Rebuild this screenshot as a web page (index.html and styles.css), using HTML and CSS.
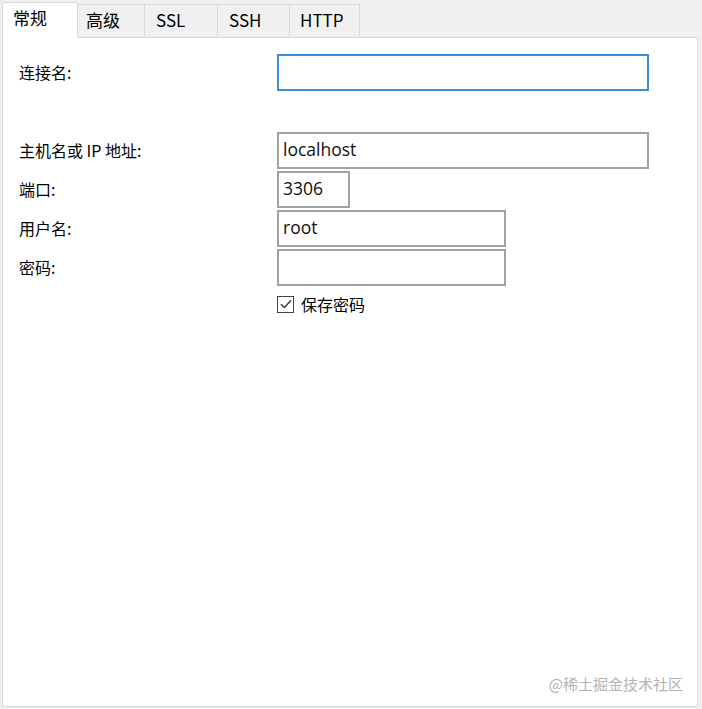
FILE: index.html
```html
<!DOCTYPE html>
<html lang="zh-CN">
<head>
  <meta charset="UTF-8">
  <title>连接属性</title>
  <link rel="stylesheet" href="styles.css">
</head>
<body>
  <div class="tabs">
    <div class="tab active">常规</div>
    <div class="tab">高级</div>
    <div class="tab">SSL</div>
    <div class="tab">SSH</div>
    <div class="tab">HTTP</div>
  </div>

  <div class="panel">
    <div class="form">
      <label class="label">连接名:</label>
      <div class="field"><div class="input wide focus"></div></div>

      <div class="spacer"></div>

      <label class="label">主机名或 IP 地址:</label>
      <div class="field"><div class="input wide">localhost</div></div>

      <label class="label">端口:</label>
      <div class="field"><div class="input port">3306</div></div>

      <label class="label">用户名:</label>
      <div class="field"><div class="input mid">root</div></div>

      <label class="label">密码:</label>
      <div class="field"><div class="input mid"></div></div>

      <div></div>
      <div class="check-row">
        <span class="checkbox">
          <svg width="14" height="14" viewBox="0 0 14 14">
            <path d="M2 7.2 L5.4 10.6 L12 3.2" fill="none" stroke="#333" stroke-width="1.4"/>
          </svg>
        </span>
        <span>保存密码</span>
      </div>
    </div>

    <div class="watermark">@稀土掘金技术社区</div>
  </div>
</body>
</html>
```

FILE: styles.css
```css
* {
  box-sizing: border-box;
}
body {
  margin: 0;
  width: 702px;
  height: 709px;
  background: #f0f0f0;
  font-family: "Noto Sans CJK SC", "Noto Sans", sans-serif;
  font-size: 16px;
  color: #000;
}
.tabs {
  display: flex;
  align-items: flex-end;
  height: 37px;
  padding-left: 2px;
}
.tab {
  height: 32px;
  padding: 0 8px;
  border: 1px solid #d9d9d9;
  border-bottom: none;
  border-left: none;
  background: #f0f0f0;
  line-height: 30px;
  font-size: 17px;
  margin-bottom: 1px;
}
.tab:nth-child(2) { width: 68px; border-left: 1px solid #d9d9d9; }
.tab:nth-child(3) { width: 73px; padding-left: 11px; }
.tab:nth-child(4) { width: 72px; padding-left: 11px; }
.tab:nth-child(5) { width: 70px; padding-left: 10px; }
.tab.active {
  width: 76px;
  height: 36px;
  margin-bottom: -1px;
  background: #fff;
  border: 1px solid #d9d9d9;
  border-bottom: none;
  padding: 0 10px;
  line-height: 30px;
  position: relative;
  z-index: 1;
  margin-right: -1px;
}
.panel {
  position: relative;
  width: 696px;
  height: 670px;
  margin-left: 2px;
  background: #fff;
  border: 1px solid #d9d9d9;
  padding: 16px 0 0 16px;
}
.form {
  display: grid;
  grid-template-columns: 258px 1fr;
  row-gap: 2px;
  align-items: center;
}
.label {
  line-height: 37px;
  white-space: nowrap;
}
.spacer {
  grid-column: 1 / 3;
  height: 37px;
}
.input {
  height: 37px;
  border: 2px solid #a2a2a2;
  padding: 0 4px;
  line-height: 31px;
  font-size: 17.5px;
  font-family: "Open Sans", "Noto Sans", sans-serif;
  color: #111;
}
.input.focus {
  border-color: #3a8ee0;
}
.input.wide { width: 372px; }
.input.mid { width: 229px; }
.input.port { width: 73px; }
.check-row {
  display: flex;
  align-items: center;
  gap: 7px;
  margin-top: 6px;
  height: 20px;
}
.checkbox {
  width: 17px;
  height: 17px;
  border: 1px solid #444;
  display: flex;
  align-items: center;
  justify-content: center;
  background: #fff;
}
.watermark {
  position: absolute;
  right: 14px;
  bottom: 12px;
  font-size: 15px;
  color: #b3b3b3;
}
```
